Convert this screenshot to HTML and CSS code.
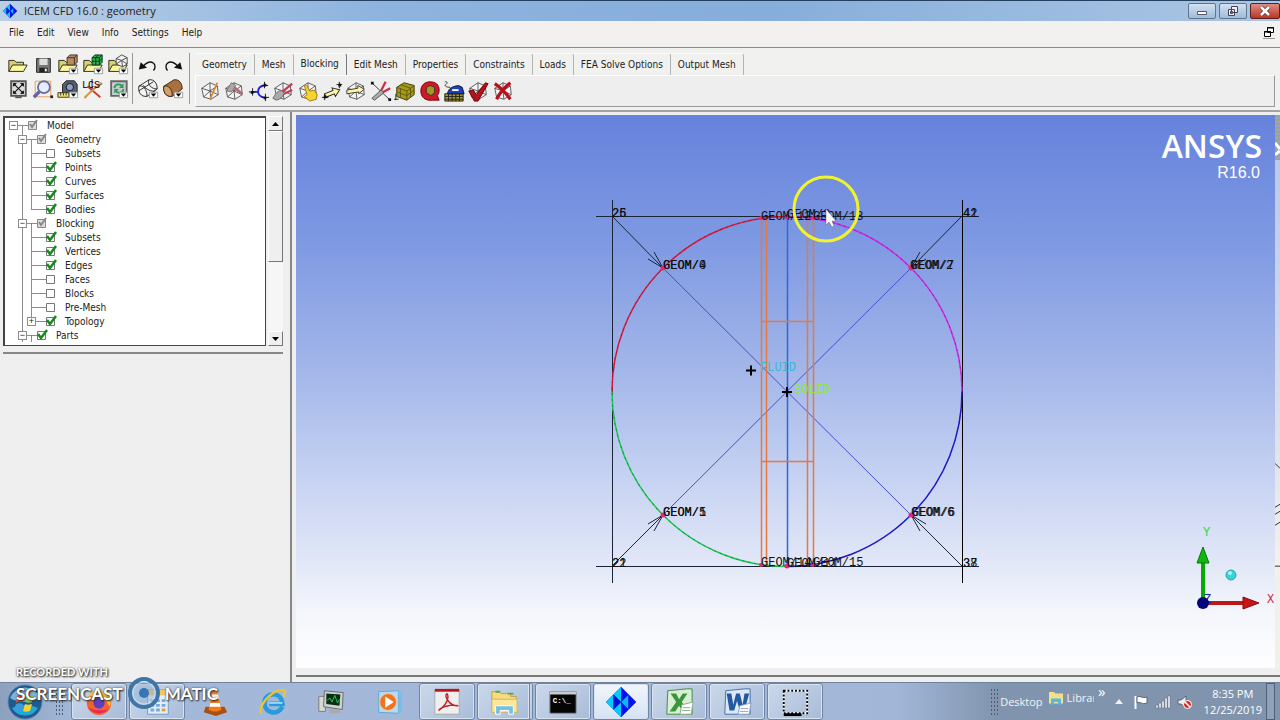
FILE: index.html
```html
<!DOCTYPE html>
<html lang="en">
<head>
  <meta charset="UTF-8">
  <meta name="viewport" content="width=device-width, initial-scale=1.0">
  <title>ICEM CFD 16.0 : geometry</title>
  <link rel="stylesheet" href="styles.css">
</head>
<body>

  <!-- shared icon parts -->
  <svg class="defs" width="0" height="0" aria-hidden="true">
    <symbol id="wire" viewBox="0 0 24 24">
      <path d="M12 3 20 6.500 21 16 13 21 5 18.500 3 9ZM12 12 12 3M12 12 20 6.500M12 12 21 16M12 12 13 21M12 12 5 18.500M12 12 3 9" fill="#f4f4f4" stroke="#555" stroke-width="1"/>
    </symbol>
    <symbol id="folder" viewBox="0 0 24 24">
      <path d="M2 19V7h6l2 2h8v3" fill="#d8d26a" stroke="#222"/>
      <path d="M2 19 6 12h16l-4 7Z" fill="#fbf8a0" stroke="#222"/>
    </symbol>
    <symbol id="drop" viewBox="0 0 24 24">
      <path d="M13.500 15.500h9v6h-9z" fill="#fff" stroke="#999"/>
      <path d="M15 17h6l-3 3.500z" fill="#000"/>
    </symbol>
    <symbol id="icem" viewBox="0 0 24 24">
      <path d="M12 0 24 12 12 24 0 12Z" fill="#0010d8"/>
      <path d="M12 0v12L6 6ZM6 6v12L0 12ZM12 12v12l-6-6Z" fill="#0cf"/>
      <path d="M6 6l6 6-6 6Z" fill="#0010d8"/>
      <path d="M12 12 18 6v12Z" fill="#08b8ee"/>
      <path d="M12 0 18 6 12 12ZM12 12v12l6-6ZM18 6v12l6-6Z" fill="#0010f0"/>
    </symbol>
  </svg>

  <header class="titlebar">
    <svg class="title-icon"><use href="#icem"/></svg>
    <span class="title-text">ICEM CFD 16.0 : geometry</span>
    <div class="window-buttons">
      <button class="win-btn" aria-label="Minimize"><svg width="12" height="12"><path d="M1.500 6.500h9v3h-9z" fill="#fff" stroke="#556"/></svg></button>
      <button class="win-btn" aria-label="Restore"><svg width="12" height="12"><path d="M4.500 1.500h6v6h-6zM1.500 4.500h6v6h-6zM3.500 6.500h2v2h-2z" fill="#eef" stroke="#445"/></svg></button>
      <button class="win-btn close" aria-label="Close"><svg width="12" height="12"><path d="M2 2l8 8M10 2l-8 8" stroke="#633" stroke-width="4"/><path d="M2 2l8 8M10 2l-8 8" stroke="#fff" stroke-width="2.500"/></svg></button>
    </div>
  </header>

  <nav class="menubar">
    <button>File</button>
    <button>Edit</button>
    <button>View</button>
    <button>Info</button>
    <button>Settings</button>
    <button>Help</button>
    <button class="mdi-restore" aria-label="Restore window"><svg width="12" height="12"><path d="M4.500 1.500h6v5h-6zM4 2h7M1.500 5.500h6v5h-6zM1 6h7" fill="#fff" stroke="#000"/></svg></button>
  </nav>

  <div class="toolbar">
    <div class="tool-group files">
      <button aria-label="Open"><svg viewBox="0 0 24 24"><use href="#folder"/></svg></button>
      <button aria-label="Save"><svg viewBox="0 0 24 24"><path d="M5 5h15v15H5z" fill="#777" stroke="#222"/><path d="M8 5h9v7H8z" fill="#ddd"/><path d="M8 15h9v5H8z" fill="#222"/><path d="M14 16h2v3h-2z" fill="#fff"/></svg></button>
      <button aria-label="Open geometry"><svg viewBox="0 0 24 24"><use href="#folder"/><path d="M11 4l3-3h8v8l-3 3h-8z" fill="#b98a5c" stroke="#333"/><path d="M11 4h8v8M19 4l3-3" fill="none" stroke="#333"/><use href="#drop"/></svg></button>
      <button aria-label="Open mesh"><svg viewBox="0 0 24 24"><use href="#folder"/><path d="M11 4l3-3h8v8l-3 3h-8z" fill="#2fae4a" stroke="#032"/><path d="M11 4h8v8M19 4l3-3M11 8h8l3-3M15 4v8M18 1l-3 3" fill="none" stroke="#032"/><use href="#drop"/></svg></button>
      <button aria-label="Open blocking"><svg viewBox="0 0 24 24"><use href="#folder"/><path d="M10 5l6-4 6 3v7l-5 3-7-3zM10 5l6 2 6-3M16 7l1 7M10 11l6-4 6 4" fill="#f4f4f4" stroke="#444"/><use href="#drop"/></svg></button>
      <button aria-label="Fit window"><svg viewBox="0 0 24 24"><path d="M4.500 3.500h16v16h-16z" fill="#ddd" stroke="#555" stroke-width="2"/><path d="M8 7l9 9M17 7l-9 9" stroke="#111" stroke-width="1.200"/><path d="M7 9V6h3zM15 6h3v3zM18 14v3h-3zM10 17H7v-3z" fill="#111" stroke="#111"/><path d="M9 20h7v2H9z" fill="#555"/></svg></button>
      <button aria-label="Box zoom"><svg viewBox="0 0 24 24"><path d="M3.500 3.500h17v17h-17z" fill="none" stroke="#e69a58"/><circle cx="13" cy="10" r="6.500" fill="#e8ecff" stroke="#66709a" stroke-width="2"/><path d="M8 15l-6 6" stroke="#6262a8" stroke-width="3.500"/><path d="M20 19h3v3h-3z" fill="#222"/></svg></button>
      <button aria-label="Measure"><svg viewBox="0 0 24 24"><path d="M6 7l4-4h9l3 4v11H6z" fill="#555e70" stroke="#222"/><circle cx="14" cy="10" r="4" fill="#8ca0c8" stroke="#111"/><path d="M1 16h12v5H1z" fill="#eee45c" stroke="#333"/><path d="M4 16v3M7 16v3M10 16v3" stroke="#333"/><use href="#drop"/></svg></button>
      <button aria-label="Local coordinate system"><svg viewBox="0 0 24 24"><path d="M11 1v12l11-7M11 13 3 22" stroke="#3857b8" fill="none" stroke-width="1.500"/><path d="M6 9l14 12" stroke="#d0392d" stroke-width="2"/><path d="M3 21 21 5" stroke="#e89632" stroke-width="2"/><text x="0" y="11" class="icon-text">LCS</text></svg></button>
      <button aria-label="Refresh"><svg viewBox="0 0 24 24"><path d="M4.500 3.500h17v16h-17z" fill="#c5cad4" stroke="#666" stroke-width="2"/><path d="M8 11c1-5 6-5 9-2M18 12c-1 5-6 5-9 2" stroke="#2ba04a" stroke-width="2" fill="none"/><path d="M18 6v5h-5zM8 17v-5h5z" fill="#2ba04a"/><use href="#drop"/></svg></button>
    </div>
    <div class="tool-group history">
      <button aria-label="Undo"><svg viewBox="0 0 24 24"><path d="M18 18c5-6-2-14-11-5" stroke="#111" fill="none" stroke-width="1.500"/><path d="M2 17 4 9l7 6z" fill="#111"/></svg></button>
      <button aria-label="Redo"><svg viewBox="0 0 24 24"><path d="M6 18C1 12 8 4 17 13" stroke="#111" fill="none" stroke-width="1.500"/><path d="M22 17 20 9l-7 6z" fill="#111"/></svg></button>
      <button aria-label="Wireframe"><svg viewBox="0 0 24 24"><path d="M2 9 13 2c6-1 9 4 9 10l-11 8C4 21 1 15 2 9ZM2 9c4-2 9 3 9 11M13 2c-2 4 2 10 9 10M2 14 18 4M7 8c3 5 9 7 13 6" fill="#f3f3f3" stroke="#222"/><use href="#drop"/></svg></button>
      <button aria-label="Solid display"><svg viewBox="0 0 24 24"><path d="M2 9 13 2c6-1 9 4 9 10l-11 8C4 21 1 15 2 9Z" fill="#a9713f" stroke="#3a2412"/><path d="M2 9c5-2 10 4 9 11C4 21 1 15 2 9Z" fill="#d3a06c" stroke="#3a2412"/><use href="#drop"/></svg></button>
    </div>

    <div class="ribbon">
      <div class="tabs" role="tablist">
        <button role="tab">Geometry</button>
        <button role="tab">Mesh</button>
        <button role="tab" class="active" aria-selected="true">Blocking</button>
        <button role="tab">Edit Mesh</button>
        <button role="tab">Properties</button>
        <button role="tab">Constraints</button>
        <button role="tab">Loads</button>
        <button role="tab">FEA Solve Options</button>
        <button role="tab">Output Mesh</button>
      </div>
      <div class="tab-panel" role="tabpanel">
        <div class="block-tools">
          <button aria-label="Create block"><svg viewBox="0 0 24 24"><use href="#wire"/><path d="M20 3 12 21" stroke="#d98a1e" stroke-width="2"/></svg></button>
          <button aria-label="Split block"><svg viewBox="0 0 24 24"><use href="#wire"/><path d="M4 12 9 3l5 3-5 7z" fill="#aaa" stroke="#777"/><path d="M12 8l9 7" stroke="#b66a72" stroke-width="3"/></svg></button>
          <button aria-label="Merge vertices"><svg viewBox="0 0 24 24"><path d="M17 6c-8 2-8 11 0 13M11 13H5" fill="none" stroke="#2020e0" stroke-width="2"/><path d="M15 6h7M18 2v7M1 13h7M5 9v8M15 19h8M19 15v8" stroke="#111"/><path d="M17 4h3v3h-3zM3 12h3v3H3zM17 18h3v3h-3z" fill="#111"/></svg></button>
          <button aria-label="Edit block"><svg viewBox="0 0 24 24"><use href="#wire"/><path d="M22 4 10 14M22 11 9 17" stroke="#c23c52" stroke-width="2.500"/><path d="M11 12c-4-2-8 4-10 8l4 2c4-1 7-4 8-7" fill="#aaa" stroke="#666"/></svg></button>
          <button aria-label="Associate"><svg viewBox="0 0 24 24"><use href="#wire"/><path d="M8 6c2-2 3 1 6 6l5-1 3 5-1 5-7 2-6-5 3-2z" fill="#f6d32d" stroke="#9a7610"/></svg></button>
          <button aria-label="Move vertex"><svg viewBox="0 0 24 24"><path d="M4 12h10V9l7 5-7 5v-3H4z" fill="#fff7a8" stroke="#222" transform="rotate(-22 12 14)"/><path d="M1 19h7M4 15v7M17 5h6M20 2v7" stroke="#111"/><path d="M3 17h3v3H3zM19 4h3v3h-3z" fill="#111"/></svg></button>
          <button aria-label="Transform blocks"><svg viewBox="0 0 24 24"><use href="#wire"/><path d="M2 11l12-2V6l7 4-6 5v-2L2 15z" fill="#fff7a8" stroke="#333"/></svg></button>
          <button aria-label="Edit edge"><svg viewBox="0 0 24 24"><path d="M2 3 22 22" stroke="#333"/><path d="M17 2 11 14M22 9l-11 6" stroke="#c83248" stroke-width="2.500"/><path d="M12 11 2 20l3 2 10-8z" fill="#aaa" stroke="#555"/><path d="M1 2h3v3H1zM20 20h3v3h-3z" fill="#111"/></svg></button>
          <button aria-label="Pre-mesh params"><svg viewBox="0 0 24 24"><path d="M3 8l8-5 11 3v10l-8 6-11-4z" fill="#a49a18" stroke="#3c3808"/><path d="M3 8l11 4 8-6M14 12v10M3 13l11 4 8-6M7 5l11 4v10M7 9v10" fill="none" stroke="#5e580c"/><path d="M2 15v7M0 21h5" stroke="#222"/></svg></button>
          <button aria-label="Pre-mesh quality"><svg viewBox="0 0 24 24"><path d="M12 2c6 0 10 3 10 9 0 3-1 5-2 6l2 5h-7c-8 1-13-3-13-10 0-6 4-10 10-10Z" fill="#d01828" stroke="#700"/><path d="M8 8l4-2 5 2v6l-4 3-5-3z" fill="#a49a18" stroke="#333"/></svg></button>
          <button aria-label="Pre-mesh smooth"><svg viewBox="0 0 24 24"><path d="M2 15h20v8H2z" fill="#a49a18" stroke="#222"/><path d="M2 18h20M2 21h20M6 15v8M10 15v8M14 15v8M18 15v8" stroke="#222"/><path d="M5 14c2-6 6-7 12-8l4 2 2 7H5z" fill="#1c3fbf" stroke="#112"/><path d="M10 11h7" stroke="#fff" stroke-width="2"/><path d="M2 2c3-1 3 2 1 3s0 3 5 3" fill="none" stroke="#333"/></svg></button>
          <button aria-label="Check blocks"><svg viewBox="0 0 24 24"><use href="#wire"/><path d="M2 12l5-1 3 5L20 3l3 1-11 19H8z" fill="#b5121e" stroke="#600"/></svg></button>
          <button aria-label="Delete block"><svg viewBox="0 0 24 24"><use href="#wire"/><path d="M3 4c6 4 12 10 17 17M20 3C14 8 8 14 5 21" stroke="#b5121e" stroke-width="3.500" fill="none"/></svg></button>
        </div>
      </div>
    </div>
  </div>

  <main class="workspace">
    <aside class="sidebar">
      <div class="tree-box">
        <ul class="tree">
          <li>
            <div class="row parent"><button class="expander" aria-label="Collapse Model">−</button><input type="checkbox" class="partial" id="model" checked><label for="model">Model</label></div>
            <ul>
              <li>
                <div class="row parent"><button class="expander" aria-label="Collapse Geometry">−</button><input type="checkbox" class="partial" id="geometry" checked><label for="geometry">Geometry</label></div>
                <ul>
                  <li><div class="row leaf"><input type="checkbox" id="g-subsets"><label for="g-subsets">Subsets</label></div></li>
                  <li><div class="row leaf"><input type="checkbox" id="points" checked><label for="points">Points</label></div></li>
                  <li><div class="row leaf"><input type="checkbox" id="curves" checked><label for="curves">Curves</label></div></li>
                  <li><div class="row leaf"><input type="checkbox" id="surfaces" checked><label for="surfaces">Surfaces</label></div></li>
                  <li><div class="row leaf"><input type="checkbox" id="bodies" checked><label for="bodies">Bodies</label></div></li>
                </ul>
              </li>
              <li>
                <div class="row parent"><button class="expander" aria-label="Collapse Blocking">−</button><input type="checkbox" class="partial" id="blocking" checked><label for="blocking">Blocking</label></div>
                <ul>
                  <li><div class="row leaf"><input type="checkbox" id="b-subsets" checked><label for="b-subsets">Subsets</label></div></li>
                  <li><div class="row leaf"><input type="checkbox" id="vertices" checked><label for="vertices">Vertices</label></div></li>
                  <li><div class="row leaf"><input type="checkbox" id="edges" checked><label for="edges">Edges</label></div></li>
                  <li><div class="row leaf"><input type="checkbox" id="faces"><label for="faces">Faces</label></div></li>
                  <li><div class="row leaf"><input type="checkbox" id="blocks"><label for="blocks">Blocks</label></div></li>
                  <li><div class="row leaf"><input type="checkbox" id="pre-mesh"><label for="pre-mesh">Pre-Mesh</label></div></li>
                  <li><div class="row"><button class="expander" aria-label="Expand Topology">+</button><input type="checkbox" id="topology" checked><label for="topology">Topology</label></div></li>
                </ul>
              </li>
              <li>
                <div class="row parent"><button class="expander" aria-label="Collapse Parts">−</button><input type="checkbox" id="parts" checked><label for="parts">Parts</label></div>
              </li>
            </ul>
          </li>
        </ul>
        <div class="scrollbar">
          <button aria-label="Scroll up"><svg width="7" height="4"><path d="M0 4h7L3.500 0z"/></svg></button>
          <div class="thumb"></div>
          <button aria-label="Scroll down"><svg width="7" height="4"><path d="M0 0h7L3.500 4z"/></svg></button>
        </div>
      </div>
      <div class="divider"></div>
    </aside>

    <section class="view">
      <div class="canvas">
        <!-- model coordinates follow the window, origin at top left of the screen -->
        <svg class="scene" viewBox="296 115 979 553" preserveAspectRatio="xMidYMid meet">
          <g stroke="#1c2438" stroke-width="1" fill="none">
            <path d="M596 216.500H979M596 566.500H979M612.500 200V583"/>
            <path d="M962.500 200V583" stroke="#000"/>
            <path d="M612 216 663 268M962 216 911 268M612 566 663 515M962 566 911 515"/>
            <path d="M648 259 663 268 654 252M926 259 911 268 920 252M648 524 663 515 654 531M926 524 911 515 920 531"/>
          </g>
          <g stroke="#4450cc" stroke-width="1" fill="none">
            <path d="M663 268 911 515M911 268 663 515"/>
            <path d="M787.500 217V566" stroke="#2a68e0" stroke-width="1.500"/>
          </g>
          <g stroke="#e8783c" stroke-width="1.500" fill="none">
            <path d="M761.500 218V566M766.500 218V566M807.500 218V566M813.500 218V566M761 321.500H813M761 461.500H813"/>
          </g>
          <g stroke-width="1.500" fill="none">
            <path d="M612 391.500A175 175 0 0 1 787 216.500" stroke="#d8183c"/>
            <path d="M787 216.500A175 175 0 0 1 962 391.500" stroke="#d424e4"/>
            <path d="M962 391.500A175 175 0 0 1 787 566.500" stroke="#2018d0"/>
            <path d="M787 566.500A175 175 0 0 1 612 391.500" stroke="#18c850"/>
            <circle cx="787" cy="391.500" r="175" stroke="#222244" stroke-width="1" stroke-dasharray="2 4" opacity="0.400"/>
          </g>
          <g fill="#e8286e">
            <circle cx="663" cy="268" r="2.500"/><circle cx="911" cy="268" r="2.500"/><circle cx="663" cy="515" r="2.500"/><circle cx="911" cy="515" r="2.500"/>
            <circle cx="787" cy="217" r="2.500"/><circle cx="787" cy="566" r="2.500"/><circle cx="761" cy="218" r="2"/><circle cx="813" cy="218" r="2"/><circle cx="761" cy="565" r="2"/><circle cx="813" cy="565" r="2"/>
          </g>
          <path d="M746 370.500H756M751 365.500V375.500M782 392H792M787 387V397" stroke="#000" stroke-width="2"/>
          <g class="mono">
            <text x="612" y="217">25</text><text x="612" y="217">26</text>
            <text x="963" y="217">41</text><text x="963" y="217">42</text>
            <text x="612" y="567">21</text><text x="612" y="567">22</text>
            <text x="963" y="567">38</text><text x="963" y="567">37</text>
            <text x="663" y="269">GEOM/0</text><text x="663" y="269">GEOM/4</text>
            <text x="910" y="269">GEOM/2</text><text x="911" y="269">GEOM/7</text>
            <text x="663" y="516">GEOM/5</text><text x="663" y="516">GEOM/1</text>
            <text x="911" y="516">GEOM/6</text><text x="912" y="516">GEOM/6</text>
            <text x="761" y="220">GEOM/12</text><text x="787" y="218">GEOM/3</text><text x="813" y="220">GEOM/13</text>
            <text x="761" y="566">GEOM/14</text><text x="787" y="567">GEOM/11</text><text x="813" y="566">GEOM/15</text>
            <text x="760" y="371" class="fluid">FLUID</text>
            <text x="794" y="393" class="solid">SOLID</text>
          </g>
          <text x="1262" y="158" class="brand">ANSYS</text>
          <text x="1260" y="178" class="version">R16.0</text>
          <g>
            <path d="M1203 602V560" stroke="#08a808" stroke-width="4"/>
            <path d="M1197 563 1203 547 1209 563Z" fill="#0eb80e" stroke="#087808"/>
            <path d="M1203 603H1244" stroke="#c01818" stroke-width="4"/>
            <path d="M1243 597 1259 603 1243 609Z" fill="#c81414" stroke="#801010"/>
            <text x="1204" y="603" class="axis z">Z</text>
            <circle cx="1203" cy="603" r="6" fill="#04047c"/>
            <circle cx="1231" cy="575" r="5" fill="#38d4d4" stroke="#20a8b0"/>
            <circle cx="1230" cy="573" r="2" fill="#a8f4f4"/>
            <text x="1203" y="536" class="axis y">Y</text>
            <text x="1267" y="603" class="axis x">X</text>
          </g>
          <circle cx="826" cy="209" r="32" fill="none" stroke="#f3f32c" stroke-width="3"/>
          <path d="M826 209V225L829 222 832 227 834 226 832 221 836 221Z" fill="#fff" stroke="#667" stroke-width="0.500"/>
        </svg>
        <svg class="edge" viewBox="0 0 5 554" preserveAspectRatio="none">
          <path d="M0 28 5 34M0 40 5 36" stroke="#fff" stroke-width="3"/>
          <path d="M0 349 5 354M0 393 5 390M0 400 5 397M0 411 5 408M0 452H5" stroke="#333" stroke-width="1"/>
        </svg>
      </div>
    </section>
  </main>

  <footer class="taskbar">
    <button class="start" aria-label="Start">
      <svg width="36" height="36" viewBox="0 0 36 36"><circle cx="18" cy="18" r="17" fill="#1f5a8e" stroke="#5a86ae"/><path d="M3 14a16 16 0 0 1 30 0c-8 5-22 5-30 0Z" fill="#7fb2d6"/><path d="M5 24a15 15 0 0 0 26 0c-8-4-18-4-26 0Z" fill="#23a6d8"/><path d="M10 12c3-2 5-2 7-1l-1 7c-3-1-5-1-7 1z" fill="#e85a28"/><path d="M19 11c3 1 5 1 8 0l-2 7c-2 1-5 1-7 0z" fill="#8cc63e"/><path d="M9 20c2-1 5-1 7 0l-2 7c-2-1-4-1-7 0z" fill="#3f9be0"/><path d="M18 20c2 1 4 1 7 0l-2 7c-3 1-5 1-7 0z" fill="#fbd22c"/></svg>
    </button>
    <span class="grip"></span>
    <div class="tasks">
      <button class="task open" aria-label="Firefox"><svg viewBox="0 0 32 32"><circle cx="16" cy="17" r="13" fill="#f0642c"/><path d="M4 12C7 3 20 0 27 9c2 4 2 9 0 12-4-12-16-14-23-9Z" fill="#fcc534"/><path d="M4 21c4 7 15 10 22 3-5 1-17 2-22-3Z" fill="#e8285c"/><circle cx="16" cy="17" r="6" fill="#5b3fc0"/></svg></button>
      <button class="task open" aria-label="Calendar"><svg viewBox="0 0 32 32"><path d="M6 3h22v26H6z" fill="#e4eefa" stroke="#6c98c8"/><path d="M6 3h22v6H6z" fill="#f3c468"/><path d="M9 13h4v3H9zM15 13h4v3h-4zM21 13h4v3h-4zM9 18h4v3H9zM15 18h4v3h-4zM21 18h4v3h-4zM9 23h4v3H9zM15 23h4v3h-4z" fill="#7aa7d9"/><path d="M21 23h4v3h-4z" fill="#e89c34"/></svg></button>
      <button class="task" aria-label="VLC"><svg viewBox="0 0 32 32"><path d="M6 21h20l3 6-12 4-13-4z" fill="#a8500f"/><path d="M14 3h4l5 21c-4 3-10 3-14 0z" fill="#f07c1c"/><path d="M13 8h6l2 5H12zM11 17h10l1 4H10z" fill="#fff"/></svg></button>
      <button class="task" aria-label="Internet Explorer"><svg viewBox="0 0 32 32"><path d="M26 21c-5 10-19 7-19-4 0-12 18-13 19 1H12" fill="none" stroke="#279bdc" stroke-width="5"/><path d="M12 17h14" stroke="#8fdcf8" stroke-width="2"/><path d="M4 28C-2 23 14 3 26 3c4 0 3 4 1 7" fill="none" stroke="#eac52f" stroke-width="2.500"/></svg></button>
      <button class="task" aria-label="System monitor"><svg viewBox="0 0 32 32"><path d="M3 10h7v16H3z" fill="#d8dad2" stroke="#777"/><path d="M9 4 29 6 28 24 8 21z" fill="#cfd3d0" stroke="#666"/><path d="M11 7l15 1-1 12-14-2z" fill="#072e12"/><path d="M12 14l3-2 2 4 3-7 3 8 2-4" fill="none" stroke="#2ed155"/><path d="M14 24h10l3 4H14z" fill="#aaa"/></svg></button>
      <button class="task" aria-label="Media Player"><svg viewBox="0 0 32 32"><path d="M5 5 26 4v24L5 27z" fill="#b4dcf4" stroke="#5fa4d4"/><path d="M26 4l4 2v21l-4 1z" fill="#7cbce6"/><circle cx="15" cy="16" r="9" fill="#ee7420" stroke="#f9c69c"/><path d="M12 10v12l9-6z" fill="#fff"/></svg></button>
      <button class="task open" aria-label="Adobe Reader"><svg viewBox="0 0 32 32"><path d="M3 3h26v26H3z" fill="#efefef" stroke="#aaa"/><path d="M3 2h26v3H3z" fill="#b8141c"/><path d="M7 25c8-5 12-14 9-18-4 2 3 14 12 13-7-2-18 1-21 5Z" fill="none" stroke="#c4202c" stroke-width="1.500"/></svg></button>
      <button class="task open stack" aria-label="Explorer"><svg viewBox="0 0 32 32"><path d="M3 5h8l2 2h10v3h6v16H3z" fill="#f6dc7c" stroke="#c0a040"/><path d="M7 4h5v2H7zM20 6h6v2h-6z" fill="#57a845"/><path d="M3 13h27v14H3z" fill="#f9e79e" stroke="#cfb45a"/><path d="M7 29v-9h19v9h-5v-4h-9v4z" fill="#76bfe2" stroke="#fff"/></svg></button>
      <button class="task open" aria-label="Command Prompt"><svg viewBox="0 0 32 32"><path d="M2 5h28v23H2z" fill="#050505" stroke="#8a8a8a"/><path d="M2 5h28v3H2z" fill="#c8ccd0"/><text x="5" y="17" class="prompt">C:\_</text></svg></button>
      <button class="task open current" aria-label="ICEM CFD"><svg viewBox="0 0 24 24"><use href="#icem"/></svg></button>
      <button class="task open" aria-label="Excel"><svg viewBox="0 0 32 32"><path d="M4 4 24 2h6v27H3z" fill="#d9eed2" stroke="#3c8a3c"/><path d="M7 7h6l3 6 4-6h5l-6 9 7 10h-6l-4-6-4 6H6l7-10z" fill="#3a963c"/><path d="M19 19l12-3-2 13H17z" fill="#fff" stroke="#8aaa8a"/><path d="M20 22h8M19 25h9" stroke="#84b084"/></svg></button>
      <button class="task open" aria-label="Word"><svg viewBox="0 0 32 32"><path d="M4 4 24 2h6v27H3z" fill="#dce8f7" stroke="#3e6ca8"/><path d="M5 7h5l2 12 3-12h4l3 12 2-12h5l-5 18h-5l-3-10-3 10H8z" fill="#2458a0"/><path d="M19 20l12-3-2 12H17z" fill="#fff" stroke="#8aa0c0"/><path d="M20 23h8M19 26h9" stroke="#86a2cc"/></svg></button>
      <button class="task open" aria-label="Screen recorder"><svg viewBox="0 0 32 32"><path d="M4 4h25v24H4z" fill="none" stroke="#fff" stroke-width="2"/><path d="M4 4h25v24H4z" fill="none" stroke="#000" stroke-width="2" stroke-dasharray="2 2"/><path d="M4 28h19v3H4z" fill="#000"/></svg></button>
    </div>
    <div class="tray">
      <span class="grip"></span>
      <a href="#" class="desk">Desktop</a>
      <a href="#" class="library"><svg width="16" height="16" viewBox="0 0 32 32"><path d="M2 4h10l3 3h15v20H2z" fill="#f2e08a"/><path d="M6 30V17h20v13h-6v-6h-8v6z" fill="#58b8e0"/></svg><span>Librar</span></a>
      <button class="more" aria-label="More">»</button>
      <button class="up" aria-label="Show hidden icons"><svg width="8" height="5"><path d="M0 5h8L4 0z" fill="#eef"/></svg></button>
      <button aria-label="Action Center"><svg width="16" height="16"><path d="M2.500 15V2" stroke="#fff" stroke-width="2"/><path d="M4 3c3-2 5 2 10 0v6c-5 2-7-2-10 0z" fill="#fff" stroke="#567"/></svg></button>
      <button aria-label="Network"><svg width="16" height="16"><path d="M1 11h2v3H1zM4 9h2v5H4zM7 7h2v7H7zM10 4h2v10h-2zM13 2h2v12h-2z" fill="#fff" stroke="#567" stroke-width="0.500"/></svg></button>
      <button aria-label="Volume muted"><svg width="16" height="16"><path d="M1 6h3l5-4v12l-5-4H1z" fill="#eee" stroke="#567"/><circle cx="10.500" cy="10.500" r="4" fill="#d82a2a" stroke="#fff"/><path d="M8 8l5 5" stroke="#fff" stroke-width="1.500"/></svg></button>
      <div class="clock"><span>8:35 PM</span><span>12/25/2019</span></div>
      <button class="show-desktop" aria-label="Show desktop"></button>
    </div>
  </footer>

  <div class="watermark">
    <span class="small">RECORDED WITH</span>
    <div class="large">
      <span>SCREENCAST</span>
      <svg width="34" height="34"><circle cx="17" cy="17" r="14" fill="none" stroke="#3e76a8" stroke-width="4"/><circle cx="17" cy="17" r="11" fill="#8fb0d0" fill-opacity="0.500" stroke="#c9dcf0"/><circle cx="17" cy="17" r="5" fill="#3577b4"/></svg>
      <span>MATIC</span>
    </div>
  </div>

</body>
</html>
```
FILE: styles.css
```css
* {
  box-sizing: border-box;
}

body {
  margin: 0;
  height: 100vh;
  display: flex;
  flex-direction: column;
  overflow: hidden;
  background: #efefef;
  color: #222;
  font-family: "DejaVu Sans Condensed", "Liberation Sans", Arial, sans-serif;
  font-size: 10px;
}

button {
  margin: 0;
  padding: 0;
  border: none;
  background: none;
  color: inherit;
  font: inherit;
}

svg {
  display: block;
  flex: none;
}

.defs {
  position: absolute;
}

/* title bar */
.titlebar {
  display: flex;
  align-items: center;
  height: 21px;
  flex: none;
  padding-left: 3px;
  border-top: 1px solid #25405e;
  background: linear-gradient(90deg, #bacfe6, #8db3de 30%, #86aedb 60%, #abc6e3);
  font-family: "Open Sans", "Noto Sans", sans-serif;
  font-size: 11px;
}

.title-icon {
  width: 14px;
  height: 14px;
  margin-right: 7px;
}

.title-text {
  line-height: 15px;
  padding-bottom: 2px;
}

.window-buttons {
  display: flex;
  gap: 3px;
  margin-left: auto;
}

.win-btn {
  display: flex;
  align-items: center;
  justify-content: center;
  width: 28px;
  height: 16px;
  border: 1px solid #60758e;
  border-radius: 2px;
  background: linear-gradient(#d2e0f0, #9fbbda);
}

.win-btn.close {
  width: 30px;
  border-color: #5c2020;
  background: linear-gradient(#dc8e84, #bd3522);
}

/* menu */
.menubar {
  display: flex;
  align-items: center;
  gap: 1px;
  height: 27px;
  flex: none;
  padding: 0 5px 3px 3px;
  border-bottom: 1px solid #8a8a8a;
  background: #f2f1f0;
}

.menubar button {
  padding: 0 6px;
}

.menubar .mdi-restore {
  margin-left: auto;
  padding: 0;
  border-bottom: 1px solid #999;
}

/* toolbar */
.toolbar {
  display: flex;
  height: 64px;
  flex: none;
  border-bottom: 2px solid #a3a3a3;
  background: #f1f1f0;
}

.tool-group {
  display: grid;
  grid-auto-rows: 24px;
  align-content: start;
  margin: 5px 0 6px;
  border-right: 1px solid #999;
}

.tool-group button,
.block-tools button {
  display: flex;
  align-items: center;
  justify-content: center;
  width: 24px;
  height: 24px;
}

.tool-group svg,
.block-tools svg {
  width: 22px;
  height: 22px;
}

.files {
  grid-template-columns: repeat(5, 24px);
  padding: 0 2px 0 6px;
  column-gap: 1px;
}

.history {
  grid-template-columns: repeat(2, 24px);
  padding: 0 4px 0 3px;
  column-gap: 1px;
}

.icon-text {
  font: 11px "Liberation Mono", monospace;
}

.ribbon {
  flex: 1;
  min-width: 0;
  padding: 5px 5px 3px;
}

.tabs {
  display: flex;
  height: 22px;
}

.tabs button {
  padding: 0 7px;
  border-top: 1px solid #fafafa;
  border-right: 1px solid #b4b4b4;
  border-radius: 0 3px 0 0;
  white-space: nowrap;
}

.tabs .active {
  padding-bottom: 2px;
  border-right-color: #777;
}

.tab-panel {
  height: 32px;
  border: 1px solid #fff;
  border-right-color: #999;
  border-bottom-color: #999;
  background: #eee;
}

.block-tools {
  display: flex;
  justify-content: space-between;
  align-items: center;
  max-width: 319px;
  height: 30px;
  padding-left: 2px;
}

/* model tree */
.workspace {
  flex: 1;
  display: flex;
  min-height: 0;
}

.sidebar {
  width: 292px;
  flex: none;
  padding: 4px 7px 0 3px;
  border-right: 2px solid #888;
}

.tree-box {
  display: flex;
  gap: 2px;
  height: 230px;
}

.tree {
  flex: 1;
  overflow: hidden;
  border: 1px solid #444;
  border-top-width: 2px;
  border-left-width: 2px;
  background: #fff;
}

.tree,
.tree ul {
  margin: 0;
  padding: 0;
  list-style: none;
}

.tree > li {
  margin-left: 4px;
}

.tree ul {
  margin-left: 9px;
}

.tree ul > li {
  background: linear-gradient(#8c8c8c, #8c8c8c) 4px 0 / 1px 100% no-repeat;
}

.tree ul ul > li:last-child {
  background-size: 1px 7px;
}

.row {
  display: flex;
  align-items: center;
  height: 14px;
  background: linear-gradient(#8c8c8c, #8c8c8c) 4px 7px / 15px 1px no-repeat;
}

.row.parent {
  background:
    linear-gradient(#8c8c8c, #8c8c8c) 4px 7px / 15px 1px no-repeat,
    linear-gradient(#8c8c8c, #8c8c8c) 13px 7px / 1px 7px no-repeat;
}

.row.leaf {
  padding-left: 19px;
}

.expander {
  width: 9px;
  height: 9px;
  margin-right: 10px;
  border: 1px solid #8c8c8c;
  background: #fff;
  font: 9px/7px "Liberation Sans", sans-serif;
}

.row input {
  appearance: none;
  width: 13px;
  height: 13px;
  margin: 0 6px 0 0;
  background: url("data:image/svg+xml,%3Csvg xmlns='http://www.w3.org/2000/svg' width='13' height='13'%3E%3Cpath d='M.5 2.500h8v8h-8z' fill='white' stroke='%23777'/%3E%3C/svg%3E");
}

.row input:checked {
  background: url("data:image/svg+xml,%3Csvg xmlns='http://www.w3.org/2000/svg' width='13' height='13'%3E%3Cpath d='M.5 2.500h8v8h-8z' fill='white' stroke='%23777'/%3E%3Cpath d='M1 5l3 4L10 1' fill='none' stroke='%23128a1c' stroke-width='2.500'/%3E%3C/svg%3E");
}

.row input.partial:checked {
  background: url("data:image/svg+xml,%3Csvg xmlns='http://www.w3.org/2000/svg' width='13' height='13'%3E%3Cpath d='M.5 2.500h8v8h-8z' fill='%23ddd' stroke='%23888'/%3E%3Cpath d='M2 5l2 3 5-7' fill='none' stroke='%23888' stroke-width='2'/%3E%3C/svg%3E");
}

.scrollbar {
  display: flex;
  flex-direction: column;
  width: 15px;
  background: #f6f6f6;
}

.scrollbar button {
  display: flex;
  align-items: center;
  justify-content: center;
  height: 15px;
}

.scrollbar button,
.thumb {
  border: 1px solid #fff;
  border-right-color: #777;
  border-bottom-color: #777;
  background: #efefef;
}

.thumb {
  height: 131px;
  margin-bottom: auto;
}

.divider {
  height: 3px;
  margin-top: 5px;
  border-bottom: 2px solid #888;
}

/* graphics view */
.view {
  flex: 1;
  min-width: 0;
  padding: 3px 0 5px 4px;
}

.canvas {
  display: flex;
  height: 100%;
  border-bottom: 2px solid #777;
  padding-bottom: 7px;
}

.scene {
  flex: 1;
  min-width: 0;
  height: 100%;
  background: linear-gradient(#6682dc, #7d98e2 22%, #a3b6e9 46%, #c3d0f1 64%, #e0e6f7 80%, #f4f6fc 90%, #fefeff);
}

.edge {
  width: 5px;
  height: 100%;
  background:
    repeating-linear-gradient(#b98f8f 0 1px, #8fae92 1px 3px, #a8a0c0 3px 4px) 0 0 / 100% 45px no-repeat,
    linear-gradient(#b5c4e8, #d5dcec 50%, #f1f1ea 80%);
}

.mono {
  font: 12px "Liberation Mono", "Courier New", monospace;
  fill: #111;
}

.fluid {
  fill: #3cb8cc;
}

.solid {
  fill: #8ee83c;
}

.brand {
  font: 600 32px "Open Sans", "Noto Sans", sans-serif;
  fill: #fff;
  text-anchor: end;
}

.version {
  font: 16px "Liberation Sans", Arial, sans-serif;
  fill: #fff;
  text-anchor: end;
}

.axis {
  font: 12px "Liberation Mono", monospace;
}

.axis.x {
  fill: #d02840;
}

.axis.y {
  fill: #28d838;
}

.axis.z {
  fill: #2020a0;
}

/* taskbar */
.taskbar {
  display: flex;
  height: 38px;
  flex: none;
  border-top: 1px solid #70839c;
  background: linear-gradient(90deg, #8ba1be, #a4b9d8 6%, #a2b7d8 70%, #8094ae 78%);
  font-family: "Open Sans", "Noto Sans", sans-serif;
  font-size: 11px;
}

.start {
  width: 50px;
  padding-left: 7px;
}

.grip {
  width: 8px;
  height: 28px;
  margin: 5px 8px 0 5px;
  background: radial-gradient(#4c5d74 1px, transparent 1px) 0 0 / 3px 4px;
}

.tasks {
  display: flex;
  gap: 2px;
}

.task {
  display: flex;
  align-items: center;
  justify-content: center;
  width: 56px;
}

.task svg {
  width: 30px;
  height: 30px;
}

.task.open {
  border: 1px solid #6f85a3;
  border-radius: 3px;
  background: linear-gradient(135deg, #cbd8ea, #a8bcd9);
  box-shadow: inset 0 0 0 1px #d8e3f2;
}

.task.stack {
  border-right: 4px double #6f85a3;
}

.task.current {
  background: linear-gradient(#f2f6fb, #d5e2f4);
}

.prompt {
  font: bold 8px "Liberation Mono", monospace;
  fill: #fff;
}

.tray {
  display: flex;
  align-items: center;
  margin-left: auto;
  padding-right: 5px;
  color: #fff;
}

.tray .grip {
  margin: 0 2px 0 0;
}

.tray > button {
  width: 22px;
  display: flex;
  justify-content: center;
}

.tray a {
  color: #f0f4f8;
  text-decoration: none;
}

.library {
  display: flex;
  align-items: center;
  gap: 3px;
  width: 46px;
  margin: 0 2px 8px 5px;
  overflow: hidden;
}

.tray .more {
  width: 12px;
  margin-bottom: 20px;
  font-size: 15px;
  line-height: 15px;
}

.clock {
  display: flex;
  flex-direction: column;
  align-items: center;
  margin: 0 4px 0 8px;
  line-height: 16px;
}

.tray .show-desktop {
  width: 9px;
  height: 100%;
  border: 1px solid #4f6179;
  background: #8ea1b9;
}

/* recorder mark over everything */
.watermark {
  position: absolute;
  left: 16px;
  bottom: 13px;
  color: #fff;
  font-family: Lato, sans-serif;
  font-weight: bold;
  text-shadow: 1px 1px 2px #222, 0 0 2px #444;
  pointer-events: none;
}

.small {
  font-size: 11px;
  line-height: 14px;
}

.large {
  display: flex;
  align-items: center;
  gap: 4px;
  height: 28px;
  font-size: 17px;
}
```
